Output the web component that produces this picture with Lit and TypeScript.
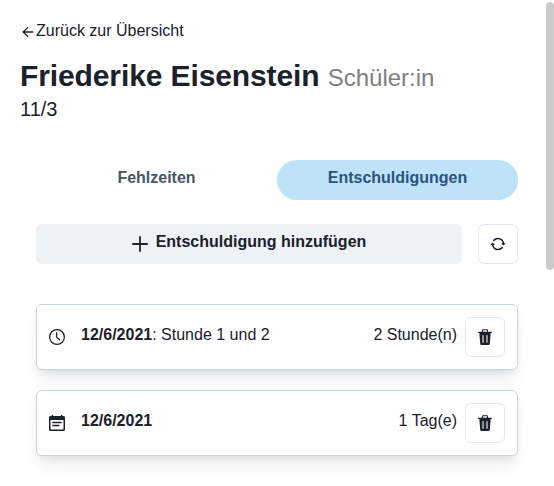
import { LitElement, html, css, svg } from "lit";
import { customElement } from "lit/decorators.js";

const icon = (size: number, body: unknown) =>
  html`<svg class="icon" width=${size} height=${size} viewBox="0 0 512 512">${body}</svg>`;

const arrowBack = svg`<path class="line square-cap" stroke-width="42" d="M244 396L100 256l144-140M114 256h290"/>`;
const add = svg`<path class="line" stroke-width="38" d="M256 106v300M406 256H106"/>`;
const sync = svg`<path class="line" stroke-width="50" d="M430 262c0-106-78-184-174-184a176 176 0 00-138 66M82 250c0 106 78 184 174 184a176 176 0 00138-66"/><path d="M10 284l72-76 72 76zM358 228l72 76 72-76z"/>`;
const clock = svg`<circle class="line" stroke-width="40" cx="256" cy="256" r="236"/><path class="line" stroke-width="40" d="M246 112v156l96 76"/>`;
const calendar = svg`<path fill-rule="evenodd" d="M48 32h36V0h48v32h248V0h48v32h36q48 0 48 48v384q0 48-48 48H48q-48 0-48-48V80q0-48 48-48zM48 160v282q0 22 22 22h372q22 0 22-22V160z"/><path class="line" stroke-width="46" d="M124 240h264M124 336h190"/>`;
const trash = svg`<path class="line" stroke-width="34" d="M176 104V46q0-22 22-22h116q22 0 22 22v58"/><path d="M48 84h416q16 0 16 20t-16 20H48q-16 0-16-20t16-20z"/><path fill-rule="evenodd" d="M74 118h364l-30 362q-4 32-36 32H140q-32 0-36-32zM176 200v240h34V200zM302 200v240h34V200z"/>`;

interface Excuse { date: string; detail: string; amount: string; symbol: unknown; }

const excuses: Excuse[] = [
  { date: "12/6/2021", detail: ": Stunde 1 und 2", amount: "2 Stunde(n)", symbol: clock },
  { date: "12/6/2021", detail: "", amount: "1 Tag(e)", symbol: calendar },
];

@customElement("app-root")
export class AppRoot extends LitElement {
  static styles = css`
    :host { display: flex; height: 486px; overflow: hidden; background: #fff; color: #1a202c;
      font: 16px/24px "Liberation Sans", Arial, sans-serif; }
    * { box-sizing: border-box; }
    main { flex: 1; min-width: 0; padding: 19px 28px 0 20px; }
    .icon { display: block; flex: none; fill: currentColor; }
    .line { fill: none; stroke: currentColor; stroke-linecap: round; stroke-linejoin: round; }
    .square-cap { stroke-linecap: square; stroke-linejoin: miter; }
    .back { display: flex; align-items: center; height: 24px; }
    .back .icon { margin-top: 2px; }
    .text { white-space: nowrap; }
    h1 { margin: 15px 0 0; font-size: 30px; line-height: 36px; letter-spacing: -0.11px; white-space: nowrap; }
    h1 small { font-size: 24px; font-weight: 400; letter-spacing: 0; color: gray; }
    .grade { font-size: 20px; line-height: 30px; height: 30px; margin-top: -2px; }
    .tabs { display: flex; margin: 36px 0 0 16px; }
    .tab { flex: 1; height: 40px; padding-bottom: 4px; border: 0; border-radius: 20px; background: none;
      font: bold 16px/20px "Liberation Sans", Arial, sans-serif; color: #4a5568; }
    .tab.active { background: #bee3f8; color: #2c5282; }
    .panel { padding: 24px 0 0 16px; }
    .actions { display: flex; gap: 16px; }
    button { padding: 0; color: inherit; }
    .add { flex: 1; height: 40px; padding-right: 4px; border: 0; border-radius: 6px; background: #edf2f7; display: flex;
      align-items: center; justify-content: center; gap: 4px; font: bold 16px/20px "Liberation Sans", Arial, sans-serif; }
    .add .text { padding-bottom: 4px; }
    .square { width: 40px; height: 40px; flex: none; border: 1px solid #e2e8f0; border-radius: 6px; background: #fff;
      display: flex; align-items: center; justify-content: center; }
    .list { display: grid; gap: 20px; margin-top: 40px; }
    .card { display: flex; align-items: center; height: 66px; padding: 0 12px; border: 1px solid #cbd5e0;
      border-radius: 6px; background: #fff;
      box-shadow: 0 10px 15px -3px rgba(0,0,0,.1), 0 4px 6px -2px rgba(0,0,0,.05); }
    .card .text { padding-bottom: 4px; }
    .card .what { flex: 1; margin-left: 16px; }
    .card .square { margin-left: 8px; }
    .track { width: 8px; flex: none; padding-top: 2px; }
    .thumb { height: 268px; border-radius: 4px; background: #cbcbcb; }
  `;

  render() {
    return html`
      <main>
        <div class="back">${icon(16, arrowBack)}<span class="text">Zurück zur Übersicht</span></div>
        <h1>Friederike Eisenstein <small>Schüler:in</small></h1>
        <div class="grade">11/3</div>
        <div class="tabs">
          <button class="tab">Fehlzeiten</button>
          <button class="tab active">Entschuldigungen</button>
        </div>
        <div class="panel">
          <div class="actions">
            <button class="add">${icon(24, add)}<span class="text">Entschuldigung hinzufügen</span></button>
            <button class="square">${icon(16, sync)}</button>
          </div>
          <div class="list">
            ${excuses.map((e) => html`
              <div class="card">
                ${icon(16, e.symbol)}
                <span class="text what"><b>${e.date}</b>${e.detail}</span>
                <span class="text">${e.amount}</span>
                <button class="square">${icon(16, trash)}</button>
              </div>`)}
          </div>
        </div>
      </main>
      <div class="track"><div class="thumb"></div></div>
    `;
  }
}
